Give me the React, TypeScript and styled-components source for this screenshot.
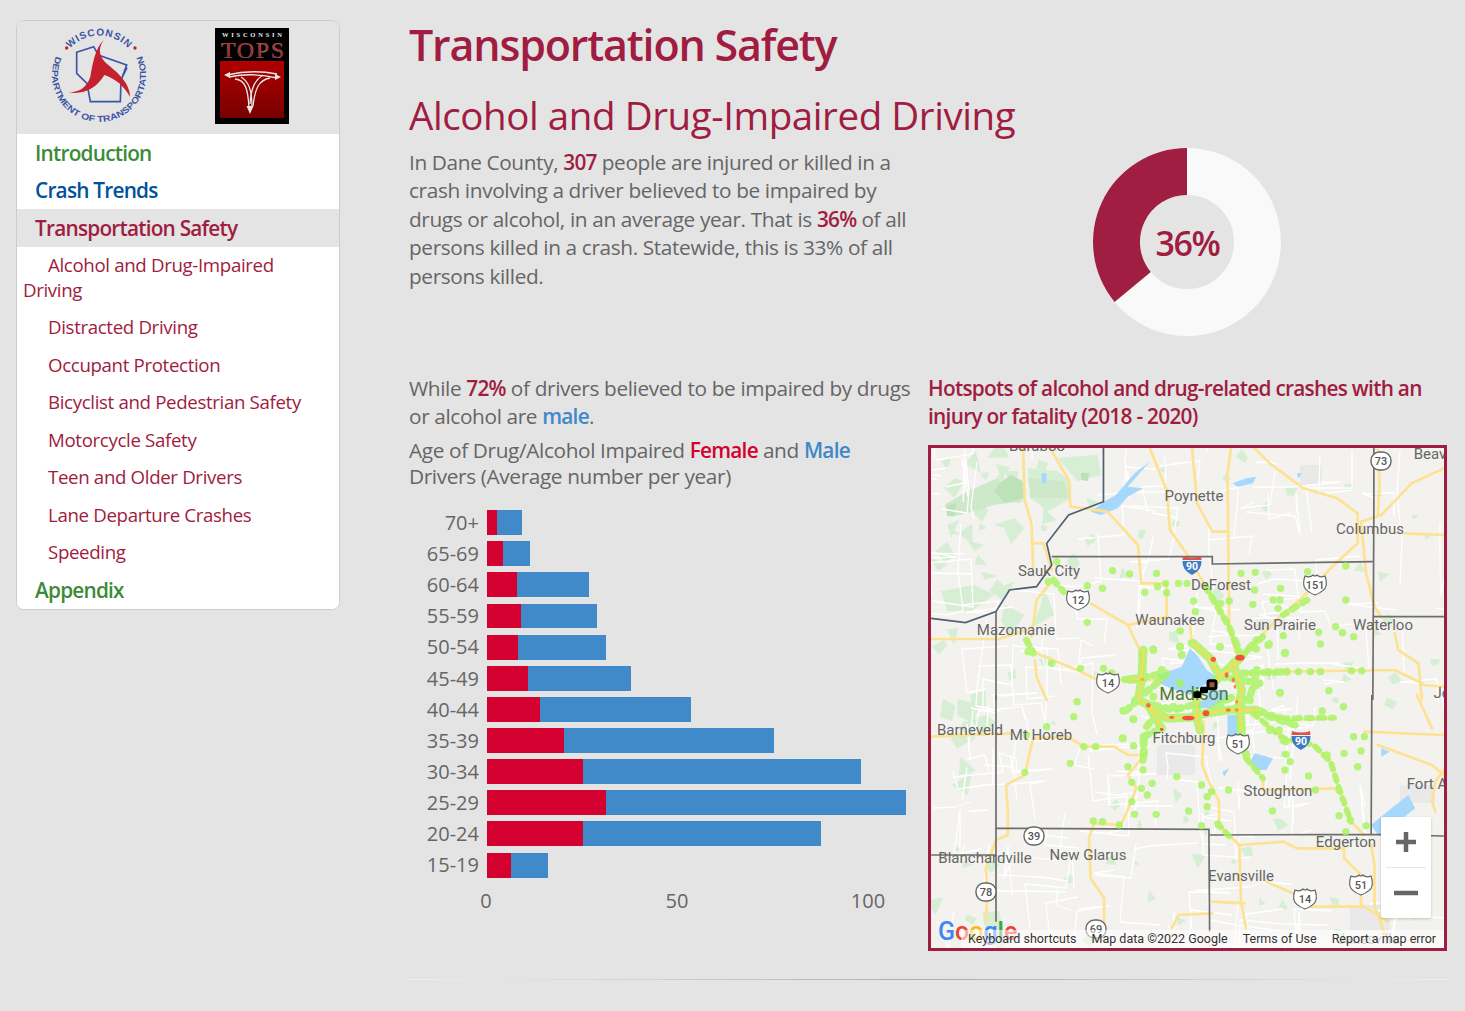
import React from "react";
import styled, { createGlobalStyle } from "styled-components";

const Wine = "#a01c40";
const Grey = "#666";
const Font = `"Open Sans", "Liberation Sans", sans-serif`;

const Global = createGlobalStyle`
  html, body { margin: 0; padding: 0; background: #e4e4e4; }
  body { font-family: ${Font}; color: ${Grey}; }
`;

const Page = styled.div`
  display: flex;
  align-items: flex-start;
  padding: 20px 18px 30px 16px;
  height: 1011px;
  box-sizing: border-box;
  overflow: hidden;
`;

const Sidebar = styled.aside`
  width: 324px;
  flex: none;
  box-sizing: border-box;
  border: 1px solid #ccc;
  border-radius: 8px;
  overflow: hidden;
  background: #fff;
`;

const LogoBar = styled.div`
  display: flex;
  align-items: flex-start;
  gap: 67px;
  height: 113px;
  padding-left: 31px;
  background: #e4e4e4;
`;

const LogoSlot = styled.div<{ $top: number }>`
  padding-top: ${(p) => p.$top}px;
  line-height: 0;
`;

const NavList = styled.nav`
  display: flex;
  flex-direction: column;
`;

const NavItem = styled.a<{ $color: string; $active?: boolean }>`
  display: block;
  padding: 6.75px 18px 5.75px;
  font-size: 20.8px;
  font-weight: 600;
  line-height: 25px;
  letter-spacing: -0.78px;
  color: ${(p) => p.$color};
  background: ${(p) => (p.$active ? "#e4e4e4" : "#fff")};
`;

const SubItem = styled.a`
  display: block;
  padding: 5px 18px 7.5px 6px;
  font-size: 18.7px;
  line-height: 25px;
  letter-spacing: -0.35px;
  text-indent: 25px;
  color: ${Wine};
`;

const Main = styled.main`
  margin-left: 69px;
  width: 1038px;
  flex: none;
`;

const Title = styled.h1`
  margin: 0;
  font-size: 43px;
  line-height: 50px;
  font-weight: 600;
  color: ${Wine};
  letter-spacing: -1.18px;
`;

const Subtitle = styled.h2`
  margin: 20px 0 0;
  font-size: 38.5px;
  line-height: 50px;
  font-weight: 400;
  color: ${Wine};
  letter-spacing: -0.42px;
`;

const TopRow = styled.section`
  display: flex;
  align-items: flex-start;
  margin-top: 7.5px;
  min-height: 226.5px;
`;

const Lead = styled.p`
  width: 505px;
  flex: none;
  margin: 0;
  font-size: 20.8px;
  line-height: 28.6px;
  letter-spacing: -0.37px;
`;

const Donut = styled.svg`
  display: block;
  margin: 0.5px 0 0 179px;
  flex: none;
`;

const Strong = styled.b<{ $color?: string }>`
  font-weight: 600;
  letter-spacing: -0.75px;
  color: ${(p) => p.$color ?? Wine};
`;

const Columns = styled.section`
  display: grid;
  grid-template-columns: 502px 519px;
  column-gap: 17px;
`;

const Column = styled.div`
  display: flex;
  flex-direction: column;
`;

const Para = styled.p`
  margin: 0;
  font-size: 20.8px;
  line-height: 28px;
  letter-spacing: -0.37px;
`;

const ChartTitle = styled.p`
  margin: 7px 0 0;
  font-size: 20.8px;
  line-height: 26px;
  letter-spacing: -0.37px;
`;

const Chart = styled.svg`
  display: block;
  margin-top: 11px;
`;

const MapTitle = styled.h3`
  margin: 0;
  font-size: 20.8px;
  line-height: 28px;
  font-weight: 600;
  letter-spacing: -0.72px;
  color: ${Wine};
`;

const MapFrame = styled.div`
  position: relative;
  margin-top: 15px;
  height: 506px;
  box-sizing: border-box;
  border: 3px solid ${Wine};
  overflow: hidden;
  background: #f3f2ef;
`;

const MapArt = styled.svg`
  display: block;
`;

const ZoomBox = styled.div`
  position: absolute;
  left: 450px;
  top: 369px;
  width: 50px;
  height: 101px;
  display: flex;
  flex-direction: column;
  align-items: center;
  background: #fff;
  border-radius: 2px;
  box-shadow: 0 1px 3px rgba(0, 0, 0, 0.2);
`;

const ZoomButton = styled.div`
  flex: 1;
  display: flex;
  align-items: center;
  justify-content: center;
`;

const ZoomRule = styled.div`
  width: 40px;
  height: 1px;
  background: #e6e6e6;
`;

const Attribution = styled.div`
  position: absolute;
  right: 0;
  bottom: 0;
  left: 30px;
  height: 18px;
  display: flex;
  align-items: center;
  justify-content: flex-end;
  gap: 15px;
  padding-right: 8px;
  box-sizing: border-box;
  background: rgba(255, 255, 255, 0.55);
  font: 12.5px/18px Roboto, "Liberation Sans", sans-serif;
  color: #333;
  white-space: nowrap;
`;

const Rule = styled.hr`
  margin: 28px 0 0;
  height: 1px;
  border: 0;
  background: linear-gradient(to right, #efefef, #adadad, #efefef);
`;

const nav = [
  "Alcohol and Drug-Impaired Driving",
  "Distracted Driving",
  "Occupant Protection",
  "Bicyclist and Pedestrian Safety",
  "Motorcycle Safety",
  "Teen and Older Drivers",
  "Lane Departure Crashes",
  "Speeding",
];

const bars: [string, number, number, number, number][] = [
  ["70+", 497, 522, 510, 25],
  ["65-69", 503, 530, 541, 25],
  ["60-64", 517, 589, 572, 25],
  ["55-59", 521, 597, 604, 24],
  ["50-54", 518, 606, 635, 25],
  ["45-49", 528, 631, 666, 25],
  ["40-44", 540, 691, 697, 25],
  ["35-39", 564, 774, 728, 25],
  ["30-34", 583, 861, 759, 25],
  ["25-29", 606, 906, 790, 25],
  ["20-24", 583, 821, 821, 25],
  ["15-19", 511, 548, 853, 25],
];

const DotLogo = () => (
  <svg width="100" height="100" viewBox="99 30 300 300" aria-label="Wisconsin Department of Transportation">
    <defs>
      <path id="arcTop" d="M 165 100 A 118 118 0 0 1 339 100" />
      <path id="arcBot" d="M 123 123 A 141 141 0 1 0 381 123" />
    </defs>
    <text fontFamily="Liberation Sans, sans-serif" fontWeight="700" fontSize="30" fill="#3d55a5">
      <textPath href="#arcTop" textLength="195" lengthAdjust="spacing">WISCONSIN</textPath>
    </text>
    <text fontFamily="Liberation Sans, sans-serif" fontWeight="700" fontSize="26" fill="#3d55a5">
      <textPath href="#arcBot" textLength="561" lengthAdjust="spacingAndGlyphs">DEPARTMENT OF TRANSPORTATION</textPath>
    </text>
    <circle cx="155" cy="99" r="5" fill="#c4202e" />
    <circle cx="360" cy="99" r="5" fill="#c4202e" />
    <path
      d="M185 112 L236 95 L250 120 L335 150 L322 185 L336 158 L318 195 L316 260 L226 260 L216 205 L185 175 Z"
      fill="none"
      stroke="#3d55a5"
      strokeWidth="5"
    />
    <path
      d="M266 75 C240 100 232 150 226 185 C215 220 190 232 160 232 C205 240 245 220 268 180 C300 190 330 215 345 246 C345 205 310 175 280 150 C255 130 245 105 266 75 Z"
      fill="#c4202e"
    />
  </svg>
);

const TopsLogo = () => (
  <svg width="74" height="96" viewBox="0 0 74 96" aria-label="Wisconsin TOPS">
    <defs>
      <linearGradient id="topsRed" x1="0" y1="0" x2="0" y2="1">
        <stop offset="0" stopColor="#b00000" />
        <stop offset="1" stopColor="#780000" />
      </linearGradient>
      <linearGradient id="topsText" x1="0" y1="0" x2="0" y2="1">
        <stop offset="0" stopColor="#d04040" />
        <stop offset="1" stopColor="#7a1c1c" />
      </linearGradient>
    </defs>
    <rect width="74" height="96" fill="#000" />
    <text x="7" y="9" fill="#eee" fontFamily="Liberation Serif, serif" fontWeight="700" fontSize="6.5" textLength="60">WISCONSIN</text>
    <text x="6" y="30" fill="url(#topsText)" stroke="#bbb" strokeWidth="0.2" fontFamily="Liberation Serif, serif" fontSize="24" textLength="63" lengthAdjust="spacing">TOPS</text>
    <rect x="5" y="33" width="64" height="57" fill="url(#topsRed)" />
    <g fill="none" stroke="#e8e8e8" strokeWidth="1.3">
      <path d="M12 47 Q37 41 62 46" />
      <path d="M14 49 Q37 44 62 50" />
      <path d="M20 51 C30 52 33 60 34 80" />
      <path d="M55 50 C44 52 40 60 38 78" />
      <path d="M26 49 C34 54 37 62 37 80" />
      <path d="M48 47 C40 52 36 60 35 76" />
    </g>
    <g fill="#e8e8e8">
      <path d="M9 47 L15 44 L15 50 Z" />
      <path d="M66 49 L60 46 L60 52 Z" />
      <path d="M35 86 L31.5 78 L38.5 78 Z" />
    </g>
  </svg>
);

const mulberry = (seed: number) => () => {
  seed |= 0;
  seed = (seed + 0x6d2b79f5) | 0;
  let t = Math.imul(seed ^ (seed >>> 15), 1 | seed);
  t = (t + Math.imul(t ^ (t >>> 7), 61 | t)) ^ t;
  return ((t ^ (t >>> 14)) >>> 0) / 4294967296;
};

const makePatches = () => {
  const r = mulberry(42);
  const out: string[] = [];
  for (let i = 0; i < 460; i++) {
    const x = 931 + r() * 514;
    const y = 448 + r() * 500;
    const left = x < 1005;
    const keep = left ? 0.6 : x > 1400 ? 0.12 : 0.16;
    if (r() > keep) {
      r();
      continue;
    }
    const s = (left ? 9 : 6) * (0.6 + r());
    const a = r() * 6.28;
    const n = r() > 0.5 ? 3 : 4;
    const pts: string[] = [];
    for (let k = 0; k < n; k++) {
      const b = a + (k * 6.28) / n + r() * 0.6;
      const q = s * (0.5 + r() * 0.7);
      pts.push(`${(x + Math.cos(b) * q).toFixed(1)},${(y + Math.sin(b) * q).toFixed(1)}`);
    }
    out.push(pts.join(" "));
  }
  return out;
};

const makeMinor = () => {
  const r = mulberry(7);
  const out: string[] = [];
  for (let i = 0; i < 150; i++) {
    let x = 931 + r() * 514;
    let y = 448 + r() * 500;
    let d = `M${x.toFixed(0)} ${y.toFixed(0)}`;
    const segs = 2 + Math.floor(r() * 3);
    let horiz = r() > 0.5;
    for (let k = 0; k < segs; k++) {
      const l = 12 + r() * 38;
      const w = (r() - 0.5) * 12;
      const sign = r() > 0.5 ? 1 : -1;
      if (horiz) {
        x += sign * l;
        y += w;
      } else {
        y += sign * l;
        x += w;
      }
      d += ` L${x.toFixed(0)} ${y.toFixed(0)}`;
      if (r() > 0.5) horiz = !horiz;
    }
    out.push(d);
  }
  return out;
};

const patches = makePatches();
const minorRoads = makeMinor();

const woodsLight = [
  "M380 30 L500 20 L510 80 L440 100 Z",
  "M30 40 L60 30 L50 70 Z",
  "M70 90 L100 100 L70 150 L40 120 Z",
  "M190 230 L250 210 L280 240 L240 290 L220 240 Z",
  "M110 280 L160 290 L130 310 Z",
  "M0 330 L50 350 L20 370 Z",
  "M140 320 L170 350 L130 350 Z",
  "M150 370 L200 385 L160 395 Z",
  "M30 430 L130 410 L190 440 L120 490 L50 490 Z",
  "M200 420 L250 400 L230 440 Z",
  "M220 470 L280 500 L240 560 L210 520 Z",
  "M340 420 L370 500 L300 540 L330 470 Z",
  "M290 60 L380 70 L420 100 L420 150 L350 190 L300 150 Z",
  "M50 230 L85 215 L60 270 Z",
  "M460 270 L490 280 L470 295 Z",
  "M330 230 L350 235 L345 250 L330 248 Z",
];
const woodsMid = [
  "M40 170 L110 130 L200 90 L280 160 L190 170 L130 190 L70 205 Z",
  "M290 90 L400 100 L412 150 L300 150 Z",
];
const woodsDark = [
  "M200 110 L240 80 L275 100 L280 150 L220 165 L190 130 Z",
  "M45 175 L75 165 L70 205 L48 205 Z",
  "M450 75 L475 75 L470 100 L450 95 Z",
];

const roadsA = [
  "M290 24 L295 180 L315 250 L320 380",
  "M370 24 L425 120 L430 200 L540 215 L630 315 L640 430 L715 430 L715 530",
  "M320 310 L350 310 L375 390",
  "M370 430 L330 480 L315 590",
  "M665 24 L715 150 L725 270 L780 350 L830 440 L900 560 L935 650",
  "M790 24 L805 190 L850 275 L895 275",
  "M905 24 L895 100 L900 560 L920 640",
  "M975 24 L1020 70 L1120 145 L1220 175 L1280 220 L1280 310 L1200 385 L1130 460 L1050 530 L935 650",
  "M1290 245 L1350 225 L1440 130 L1535 85",
  "M1340 30 L1345 130 L1340 225",
  "M1290 245 L1305 400 L1330 500 L1350 530",
  "M1420 280 L1535 285",
  "M490 490 L600 555 L640 640 L645 720",
  "M600 555 L720 530",
  "M300 600 L330 640 L450 690 L510 720 L700 720",
  "M18 597 L220 597 L300 570",
  "M325 660 L330 710 L360 780",
  "M950 700 L1060 695 L1390 690 L1480 735 L1535 740",
  "M1390 580 L1400 630 L1460 670 L1470 780",
  "M790 610 L785 560",
];

const roadsB = [
  "M970 50 L1080 75 L1200 70",
  "M970 55 L1060 130 L1150 150 L1200 200 L1225 280 L1260 380 L1300 420",
  "M825 80 L820 210 L840 260 L870 320 L870 390 L930 450 L935 620 L950 700",
  "M650 180 L600 180 L560 155 L470 155 L420 125 L320 130 L315 150 L295 240 L240 270 L245 350 L245 420 L210 435 L180 520 L185 590 L180 680",
  "M650 180 L600 240 L625 280 L610 320 L580 390 L500 385 L485 430 L490 550 L530 610 L530 690",
  "M18 125 L250 115",
  "M930 130 L945 190 L1000 250 L1000 285 L1220 280",
  "M930 450 L1060 440 L1100 460 L1240 460 L1240 490 L1290 540 L1290 630 L1370 680",
  "M1320 450 L1330 510 L1330 630 L1360 720",
  "M1010 560 L1100 600 L1130 635 L1300 635",
  "M850 620 L945 625",
  "M850 655 L750 660 L730 700",
  "M1300 110 L1535 120",
  "M1340 150 L1500 210 L1535 240",
  "M1455 0 L1500 100",
  "M1535 225 L1510 260 L1500 320 L1510 350",
];

const heatRing = [
  "M100 60 L95 145 L85 210 L115 225 L170 265 L240 262 L290 250 L355 240 L385 240 L395 180 L370 100 L390 85",
  "M115 225 L155 295",
  "M390 85 L340 130 L320 150",
  "M250 40 L300 85 L330 140",
  "M260 190 L260 260 L270 300",
  "M100 145 L60 148",
  "M380 240 L440 240",
  "M390 240 L395 300",
];

const heatBeads = [
  "M60 148 L30 148",
  "M85 210 L50 240",
  "M440 240 L480 260 L570 290",
  "M395 300 L410 380",
  "M390 85 L440 30",
  "M390 130 L530 125",
  "M60 150 L160 130",
  "M100 320 L155 295",
  "M395 80 L370 20",
  "M100 380 L100 320",
  "M75 210 L130 170 L170 130",
  "M130 225 L190 240 L250 225",
  "M330 140 L395 150 L450 160",
  "M370 240 L420 200 L440 130",
  "M290 250 L340 215 L370 200",
  "M140 250 L110 290",
];

const heatFar = [
  "M970 55 L1060 130 L1150 150 L1200 200 L1225 280 L1260 380",
  "M990 45 L1050 70 L1210 68",
  "M930 50 L930 120 L950 190 L1000 250",
  "M650 130 L650 180",
  "M865 385 L905 430",
];

const heatFarTop = [
  "M830 440 L900 560 L935 650",
  "M1130 480 L1060 525",
  "M380 420 L410 455",
  "M300 600 L320 640",
  "M640 640 L645 720",
  "M1000 590 L935 650",
];

const hotSpots: [number, number, number, number, string][] = [
  [310, 88, 8, 8, "#f4603a"],
  [390, 83, 14, 9, "#f4503a"],
  [115, 226, 7, 7, "#f4703a"],
  [155, 298, 5, 5, "#f0503a"],
  [185, 262, 8, 5, "#f4703a"],
  [235, 264, 19, 7, "#f4503a"],
  [288, 250, 10, 9, "#f4503a"],
  [355, 240, 8, 5, "#f47a3a"],
  [350, 135, 6, 8, "#f4703a"],
  [370, 150, 5, 7, "#f4803a"],
  [375, 170, 4, 6, "#f4903a"],
  [380, 215, 4, 6, "#f4903a"],
  [97, 148, 5, 5, "#f5b030"],
  [380, 240, 6, 5, "#f59a30"],
];

const dotsA: [number, number][] = [
  [555, 392], [605, 402], [685, 400], [935, 400], [977, 397], [480, 437], [525, 445], [650, 457], [688, 440], [712, 430], [750, 430], [775, 430],
  [715, 458], [1052, 445], [975, 450], [795, 483], [800, 515], [875, 490], [900, 483], [970, 493], [1030, 480], [1050, 480], [1045, 505], [1245, 480],
  [1245, 378], [1132, 395], [480, 547], [755, 573], [1165, 577], [1215, 560], [1235, 578], [1268, 590], [1170, 612], [1060, 587], [1018, 612], [1065, 637],
  [980, 627], [675, 627], [755, 620], [528, 685], [375, 670], [460, 685], [305, 635], [390, 365], [365, 425], [1015, 695], [1070, 695], [1105, 695],
  [1140, 695], [1170, 695], [1262, 692], [1292, 692], [1195, 752], [980, 737],
];

const dotsB: [number, number][] = [
  [450, 20], [440, 65], [360, 95], [300, 120], [295, 232], [430, 205], [470, 155], [505, 155], [585, 130], [617, 152], [645, 195], [600, 215], [645, 225],
  [612, 262], [640, 280], [672, 265], [658, 300], [612, 320], [620, 358], [684, 358], [575, 390], [525, 380], [498, 378], [745, 245], [818, 270], [848, 290],
  [898, 285], [835, 305], [835, 335], [780, 348], [818, 392], [868, 390], [1028, 348], [1155, 285], [1225, 285], [1135, 243], [1065, 225], [1080, 200],
  [1068, 178], [1048, 105], [1068, 140], [1240, 175], [1280, 215], [1290, 168], [1268, 125], [1300, 125], [1175, 48], [1238, 35], [1225, 362], [1258, 375],
  [1305, 392], [1245, 410], [1190, 180],
];

const dotsC: [number, number][] = [
  [130, 60], [210, 50], [245, 40], [475, 45], [525, 70], [5, 130], [40, 242], [70, 268], [38, 325], [510, 188], [530, 125], [435, 250], [510, 265], [480, 300],
  [520, 330], [210, 160], [155, 120], [190, 230], [130, 200], [330, 50], [440, 120], [420, 210], [215, 75], [75, 215],
];

const labels: [string, number, number][] = [
  ["Baraboo", 1037, 451],
  ["Beav", 1430, 459],
  ["Poynette", 1194, 501],
  ["Columbus", 1370, 534],
  ["Sauk City", 1049, 576],
  ["DeForest", 1221, 590],
  ["Waunakee", 1170, 625],
  ["Mazomanie", 1016, 635],
  ["Sun Prairie", 1280, 630],
  ["Waterloo", 1383, 630],
  ["Jo", 1442, 698],
  ["Barneveld", 970, 735],
  ["Mt Horeb", 1041, 740],
  ["Fitchburg", 1184, 743],
  ["Stoughton", 1278, 796],
  ["Fort A", 1427, 789],
  ["Edgerton", 1346, 847],
  ["New Glarus", 1088, 860],
  ["Blanchardville", 985, 863],
  ["Evansville", 1241, 881],
];

const UsShield = ({ x, y, t }: { x: number; y: number; t: string }) => (
  <g transform={`translate(${x} ${y})`}>
    <path
      d="M-10 -9 Q-5 -7 -2 -10 Q0 -8 2 -10 Q5 -7 10 -9 Q12 -3 11 1 Q10 6 0 10 Q-10 6 -11 1 Q-12 -3 -10 -9 Z"
      fill="#fff"
      stroke="#666"
      strokeWidth="1.2"
    />
    <text y="4" textAnchor="middle" fontFamily="Roboto, sans-serif" fontSize="11" fontWeight="500" fill="#555">{t}</text>
  </g>
);

const RoundShield = ({ x, y, t }: { x: number; y: number; t: string }) => (
  <g transform={`translate(${x} ${y})`}>
    <rect x="-10" y="-9" width="20" height="18" rx="8.5" fill="#fff" stroke="#666" strokeWidth="1.4" />
    <text y="4" textAnchor="middle" fontFamily="Roboto, sans-serif" fontSize="11" fontWeight="500" fill="#555">{t}</text>
  </g>
);

const Interstate = ({ x, y }: { x: number; y: number }) => (
  <g transform={`translate(${x} ${y})`}>
    <path d="M-9 -9 Q0 -6 9 -9 L9.5 -5 L-9.5 -5 Z" fill="#d9534f" />
    <path d="M-9.5 -4 H9.5 Q10 5 0 10 Q-10 5 -9.5 -4 Z" fill="#3d7cc4" />
    <text y="5" textAnchor="middle" fontFamily="Roboto, sans-serif" fontSize="10.5" fontWeight="700" fill="#fff">90</text>
  </g>
);

const HEAT = "#a6f45e";
const BEAD = "16 20";

const MapSvg = () => (
  <MapArt width="513" height="500" viewBox="931 448 513 500" aria-label="Map of Dane County crash hotspots">
    <defs>
      <filter id="soft" x="-5%" y="-5%" width="110%" height="110%">
        <feGaussianBlur stdDeviation="0.6" />
      </filter>
    </defs>
    <rect x="931" y="448" width="513" height="500" fill="#f3f2ef" />
    <g fill="#d6eed3">
      {patches.map((p, i) => (
        <polygon key={i} points={p} />
      ))}
    </g>
    <g transform="translate(931 448) scale(0.3333)">
      <g fill="#d6eed3">
        {woodsLight.map((d, i) => (
          <path key={i} d={d} />
        ))}
      </g>
      <g fill="#cde9ca">
        {woodsMid.map((d, i) => (
          <path key={i} d={d} />
        ))}
      </g>
      <g fill="#bde2ba">
        {woodsDark.map((d, i) => (
          <path key={i} d={d} />
        ))}
      </g>
    </g>
    <g fill="#e9e9e9">
      <rect x="1157" y="745" width="38" height="30" />
      <rect x="1300" y="465" width="22" height="20" />
      <rect x="1255" y="615" width="30" height="14" />
      <rect x="1350" y="905" width="40" height="25" />
      <rect x="1400" y="785" width="35" height="18" />
    </g>
    <g fill="none" stroke="#fff" strokeWidth="1.3" strokeLinejoin="round">
      {minorRoads.map((d, i) => (
        <path key={i} d={d} />
      ))}
    </g>
    <g transform="translate(925 440) scale(0.338 0.3333)" fill="#a6d8fb">
      <path d="M490 215 L530 185 L565 165 L620 100 L665 65 L600 140 L645 145 L600 170 L570 205 L520 225 Z" />
      <path d="M910 130 L950 115 L980 110 L970 130 L925 140 Z" />
      <path d="M345 100 L360 100 L358 130 L345 130 Z" />
      <path d="M1100 100 L1115 100 L1105 115 Z" />
    </g>
    <g transform="translate(1110 630) scale(0.3333)" fill="#a6d8fb">
      <path d="M145 135 L215 110 L240 55 L265 80 L290 120 L320 140 L290 160 L240 195 L180 175 L150 160 Z" />
      <path d="M290 180 L350 180 L345 210 L300 235 L250 235 L290 200 Z" />
    </g>
    <g transform="translate(925 695) scale(0.338 0.3333)" fill="#a6d8fb">
      <path d="M975 175 L1030 190 L1010 225 L975 225 L960 205 Z" />
      <path d="M895 60 L925 60 L925 130 L895 150 Z" />
      <path d="M1320 390 L1380 340 L1430 300 L1450 340 L1400 380 L1340 420 Z" />
      <path d="M880 230 L900 220 L885 245 Z" />
      <path d="M1350 160 L1375 170 L1350 185 Z" />
    </g>
    <g transform="translate(925 440) scale(0.338 0.3333)" fill="none" stroke="#fde293" strokeWidth="8" strokeLinejoin="round" strokeLinecap="round">
      {roadsA.map((d, i) => (
        <path key={i} d={d} />
      ))}
    </g>
    <g transform="translate(925 695) scale(0.338 0.3333)" fill="none" stroke="#fde293" strokeWidth="8" strokeLinejoin="round" strokeLinecap="round">
      {roadsB.map((d, i) => (
        <path key={i} d={d} />
      ))}
    </g>
    <g fill="none" stroke="#6e6e6e">
      <g transform="translate(925 440) scale(0.338 0.3333)" strokeWidth="5">
        <path d="M528 24 L528 185 L425 225 L360 310 L375 375 L330 440 L250 450 L210 515 L120 548 L18 535" stroke="#4f6075" />
        <path d="M375 350 L850 350 L850 372 L1325 365" />
        <path d="M210 515 L210 780" />
        <path d="M1328 24 L1328 205 L1325 780" />
        <path d="M1325 530 L1535 530" />
      </g>
      <g transform="translate(925 695) scale(0.338 0.3333)" strokeWidth="5">
        <path d="M210 0 L210 400 L840 403 L842 710" />
        <path d="M1322 0 L1320 418 L1535 423 M842 420 L1320 418" />
        <path d="M18 480 L210 480" />
        <path d="M210 400 L210 680" />
      </g>
    </g>
    <g filter="url(#soft)">
      <g opacity="0.8" fill={HEAT}>
        <g transform="translate(925 440) scale(0.338 0.3333)">
          {dotsA.map(([x, y], i) => (
            <circle key={i} cx={x} cy={y} r="11" />
          ))}
          <g fill="none" stroke={HEAT} strokeWidth="20" strokeLinecap="round" strokeLinejoin="round" strokeDasharray={BEAD}>
            {heatFarTop.map((d, i) => (
              <path key={i} d={d} />
            ))}
          </g>
        </g>
        <g transform="translate(925 695) scale(0.338 0.3333)">
          {dotsB.map(([x, y], i) => (
            <circle key={i} cx={x} cy={y} r="11" />
          ))}
          <g fill="none" stroke={HEAT} strokeWidth="18" strokeLinecap="round" strokeLinejoin="round" strokeDasharray={BEAD}>
            {heatFar.map((d, i) => (
              <path key={i} d={d} />
            ))}
          </g>
        </g>
        <g transform="translate(1110 630) scale(0.3333)">
          {dotsC.map(([x, y], i) => (
            <circle key={i} cx={x} cy={y} r="12" />
          ))}
          <g fill="none" stroke={HEAT} strokeLinecap="round" strokeLinejoin="round">
            <g strokeWidth="26">
              {heatRing.map((d, i) => (
                <path key={i} d={d} />
              ))}
            </g>
            <g strokeWidth="22" strokeDasharray={BEAD}>
              {heatBeads.map((d, i) => (
                <path key={i} d={d} />
              ))}
            </g>
          </g>
        </g>
      </g>
      <g transform="translate(1110 630) scale(0.3333)" fill="none" stroke="#f6dc58" strokeWidth="7" strokeLinecap="round" strokeLinejoin="round">
        {heatRing.map((d, i) => (
          <path key={i} d={d} />
        ))}
      </g>
      <g transform="translate(1110 630) scale(0.3333)">
        {hotSpots.map(([x, y, rx, ry, c], i) => (
          <ellipse key={i} cx={x} cy={y} rx={rx} ry={ry} fill={c} />
        ))}
      </g>
    </g>
    <g fontFamily="Roboto, sans-serif" fontSize="15" fill="#666" textAnchor="middle">
      {labels.map(([t, x, y]) => (
        <text key={t} x={x} y={y}>{t}</text>
      ))}
      <text x="1194" y="700" fontSize="18" fill="#4f7d3a">Madison</text>
      <text x="1368" y="944" fontSize="14" fill="#a0a0a0">Janesville</text>
    </g>
    <g transform="translate(1110 630) scale(0.3333)">
      <rect x="294" y="152" width="24" height="24" rx="5" fill="#9a5a3a" stroke="#000" strokeWidth="9" />
      <rect x="272" y="172" width="20" height="16" rx="4" fill="#000" stroke="#000" strokeWidth="4" />
      <rect x="250" y="184" width="24" height="20" rx="5" fill="#000" />
    </g>
    <UsShield x={1315} y={585} t="151" />
    <UsShield x={1078} y={600} t="12" />
    <UsShield x={1108} y={683} t="14" />
    <UsShield x={1238} y={744} t="51" />
    <UsShield x={1305} y={899} t="14" />
    <UsShield x={1361} y={885} t="51" />
    <RoundShield x={1381} y={461} t="73" />
    <RoundShield x={1034} y={836} t="39" />
    <RoundShield x={986} y={892} t="78" />
    <RoundShield x={1096} y={929} t="69" />
    <Interstate x={1192} y={565} />
    <Interstate x={1301} y={740} />
    <text x="938" y="940" fontFamily="Roboto, Liberation Sans, sans-serif" fontSize="25" fontWeight="500">
      <tspan fill="#4285f4">G</tspan>
      <tspan fill="#ea4335">o</tspan>
      <tspan fill="#fbbc05">o</tspan>
      <tspan fill="#4285f4">g</tspan>
      <tspan fill="#34a853">l</tspan>
      <tspan fill="#ea4335">e</tspan>
    </text>
  </MapArt>
);

export default function App() {
  const a = (36 / 100) * Math.PI * 2;
  const ex = 94 - Math.sin(a) * 94;
  const ey = 94 - Math.cos(a) * 94;
  const ix = 94 - Math.sin(a) * 47;
  const iy = 94 - Math.cos(a) * 47;
  return (
    <>
      <Global />
      <Page>
        <Sidebar>
          <LogoBar>
            <LogoSlot $top={4}>
              <DotLogo />
            </LogoSlot>
            <LogoSlot $top={7}>
              <TopsLogo />
            </LogoSlot>
          </LogoBar>
          <NavList>
            <NavItem $color="#3d8b37">Introduction</NavItem>
            <NavItem $color="#00529b">Crash Trends</NavItem>
            <NavItem $color={Wine} $active>Transportation Safety</NavItem>
            {nav.map((n) => (
              <SubItem key={n}>{n}</SubItem>
            ))}
            <NavItem $color="#3d8b37">Appendix</NavItem>
          </NavList>
        </Sidebar>
        <Main>
          <Title>Transportation Safety</Title>
          <Subtitle>Alcohol and Drug-Impaired Driving</Subtitle>
          <TopRow>
            <Lead>
              In Dane County, <Strong>307</Strong> people are injured or killed in a crash involving a driver believed to be impaired by drugs or alcohol, in an average year. That is <Strong>36%</Strong> of all persons killed in a crash. Statewide, this is 33% of all persons killed.
            </Lead>
            <Donut width="188" height="188" viewBox="0 0 188 188" aria-label="36%">
              <circle cx="94" cy="94" r="70.5" fill="none" stroke="#f9f9f9" strokeWidth="47" />
              <path d={`M94 0 A94 94 0 0 0 ${ex} ${ey} L${ix} ${iy} A47 47 0 0 1 94 47 Z`} fill="#a01e42" />
              <text x="94.5" y="108" textAnchor="middle" fontFamily={Font} fontSize="34" fontWeight="600" fill={Wine} letterSpacing="-1.4">36%</text>
            </Donut>
          </TopRow>
          <Columns>
            <Column>
              <Para>
                While <Strong>72%</Strong> of drivers believed to be impaired by drugs or alcohol are <Strong $color="#3f88c9">male</Strong>.
              </Para>
              <ChartTitle>
                Age of Drug/Alcohol Impaired <Strong $color="#d4002f">Female</Strong> and <Strong $color="#3f88c9">Male</Strong> Drivers (Average number per year)
              </ChartTitle>
              <Chart width="502" height="420" viewBox="409 500 502 420" aria-label="Bar chart of impaired drivers by age">
                {bars.map(([label, red, blue, y, h], i) => (
                  <g key={label}>
                    <text x="479" y={Math.round(530 + i * 31.1)} textAnchor="end" fontFamily={Font} fontSize="20" fill={Grey}>{label}</text>
                    <rect x="487" y={y} width={red - 487} height={h} fill="#d40030" />
                    <rect x={red} y={y} width={blue - red} height={h} fill="#418aca" />
                  </g>
                ))}
                <g fontFamily={Font} fontSize="20" fill={Grey} textAnchor="middle">
                  <text x="486" y="908">0</text>
                  <text x="677" y="908">50</text>
                  <text x="868" y="908">100</text>
                </g>
              </Chart>
            </Column>
            <Column>
              <MapTitle>Hotspots of alcohol and drug-related crashes with an injury or fatality (2018 - 2020)</MapTitle>
              <MapFrame>
                <MapSvg />
                <ZoomBox>
                  <ZoomButton>
                    <svg width="24" height="24" viewBox="0 0 24 24" aria-label="Zoom in">
                      <path d="M2 12 H22 M12 2 V22" stroke="#666" strokeWidth="4.5" fill="none" />
                    </svg>
                  </ZoomButton>
                  <ZoomRule />
                  <ZoomButton>
                    <svg width="24" height="24" viewBox="0 0 24 24" aria-label="Zoom out">
                      <path d="M0 12 H24" stroke="#666" strokeWidth="4.5" fill="none" />
                    </svg>
                  </ZoomButton>
                </ZoomBox>
                <Attribution>
                  <span>Keyboard shortcuts</span>
                  <span>Map data ©2022 Google</span>
                  <span>Terms of Use</span>
                  <span>Report a map error</span>
                </Attribution>
              </MapFrame>
            </Column>
          </Columns>
          <Rule />
        </Main>
      </Page>
    </>
  );
}
